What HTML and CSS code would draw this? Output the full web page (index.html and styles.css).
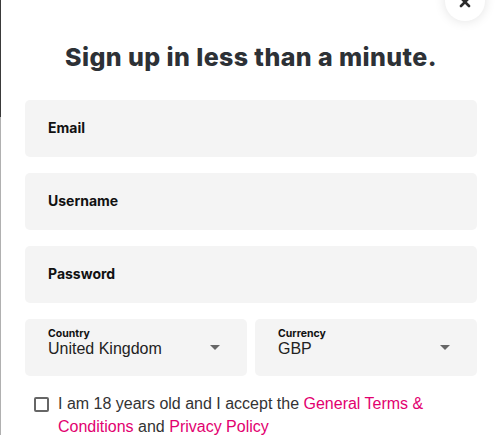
FILE: index.html
```html
<!DOCTYPE html>
<html>
<head>
<meta charset="utf-8">
<link rel="stylesheet" href="styles.css">
</head>
<body>
<div class="edge"><div class="edge-top"></div><div class="edge-bottom"></div></div>
<div class="modal">
  <button class="close" aria-label="Close">
    <svg width="12" height="12" viewBox="0 0 12 12"><path d="M2 2 L10 10 M10 2 L2 10" stroke="#2b2b2b" stroke-width="2.6" stroke-linecap="round"/></svg>
  </button>
  <h1 class="title">Sign up in less than a minute.</h1>
  <form class="form">
    <div class="field"><span class="label">Email</span></div>
    <div class="field"><span class="label">Username</span></div>
    <div class="field"><span class="label">Password</span></div>
    <div class="row">
      <div class="select">
        <div class="select-text">
          <span class="small-label">Country</span>
          <span class="value">United Kingdom</span>
        </div>
        <span class="arrow"></span>
      </div>
      <div class="select">
        <div class="select-text">
          <span class="small-label">Currency</span>
          <span class="value">GBP</span>
        </div>
        <span class="arrow"></span>
      </div>
    </div>
    <div class="terms">
      <span class="checkbox"></span>
      <p class="terms-text">I am 18 years old and I accept the <a href="#">General Terms &amp;</a><br><a href="#">Conditions</a> and <a href="#">Privacy Policy</a></p>
    </div>
  </form>
</div>
</body>
</html>
```
FILE: styles.css
```css
html, body {
  margin: 0;
  padding: 0;
  background: #fff;
  overflow: hidden;
}
body {
  width: 498px;
  height: 435px;
  position: relative;
  font-family: "Liberation Sans", Arial, sans-serif;
}
.edge {
  position: absolute;
  left: 0;
  top: 0;
  width: 1px;
  height: 435px;
  display: flex;
  flex-direction: column;
}
.edge-top { height: 117px; background: #3a3a3a; }
.edge-bottom { flex: 1; background: #b0b0b0; }
.modal {
  padding: 0 21px 0 25px;
}
.close {
  position: absolute;
  left: 445px;
  top: -19px;
  width: 40px;
  height: 40px;
  border-radius: 50%;
  border: none;
  background: #fff;
  box-shadow: 0 0 12px rgba(0,0,0,0.12);
  display: flex;
  align-items: flex-end;
  justify-content: center;
  padding: 0 0 13px 0;
}
.title {
  margin: 0 0 28px 0;
  padding-top: 42px;
  line-height: 30px;
  text-align: center;
  font-family: "Inter", sans-serif;
  font-weight: 800;
  font-size: 25px;
  letter-spacing: 0.4px;
  color: #2d3136;
}
.form {
  display: flex;
  flex-direction: column;
  gap: 16px;
}
.field {
  height: 57px;
  background: #f4f4f4;
  border-radius: 5px;
  display: flex;
  align-items: center;
  padding-left: 23px;
}
.label {
  font-family: "Inter", sans-serif;
  font-weight: 700;
  font-size: 14px;
  color: #111;
  margin-top: -2px;
}
.row {
  display: flex;
  gap: 8px;
}
.select {
  flex: 1;
  height: 57px;
  background: #f4f4f4;
  border-radius: 5px;
  display: flex;
  align-items: center;
  padding: 0 27px 0 23px;
}
.select-text {
  flex: 1;
  display: flex;
  flex-direction: column;
  margin-top: -9px;
}
.small-label {
  font-family: "Inter", sans-serif;
  font-weight: 700;
  font-size: 10.5px;
  color: #111;
  line-height: 12px;
}
.value {
  font-size: 16px;
  color: #222;
  line-height: 18px;
}
.arrow {
  width: 0;
  height: 0;
  border-left: 5px solid transparent;
  border-right: 5px solid transparent;
  border-top: 5px solid #666;
}
.terms {
  display: flex;
  align-items: flex-start;
  gap: 9px;
  padding-left: 9px;
  margin-top: 0;
}
.checkbox {
  flex: none;
  width: 11px;
  height: 11px;
  border: 2px solid #666;
  border-radius: 2px;
  margin-top: 5px;
}
.terms-text {
  margin: 0;
  font-size: 16px;
  line-height: 23px;
  color: #333;
}
.terms-text a {
  color: #e2006f;
  text-decoration: none;
}
```
